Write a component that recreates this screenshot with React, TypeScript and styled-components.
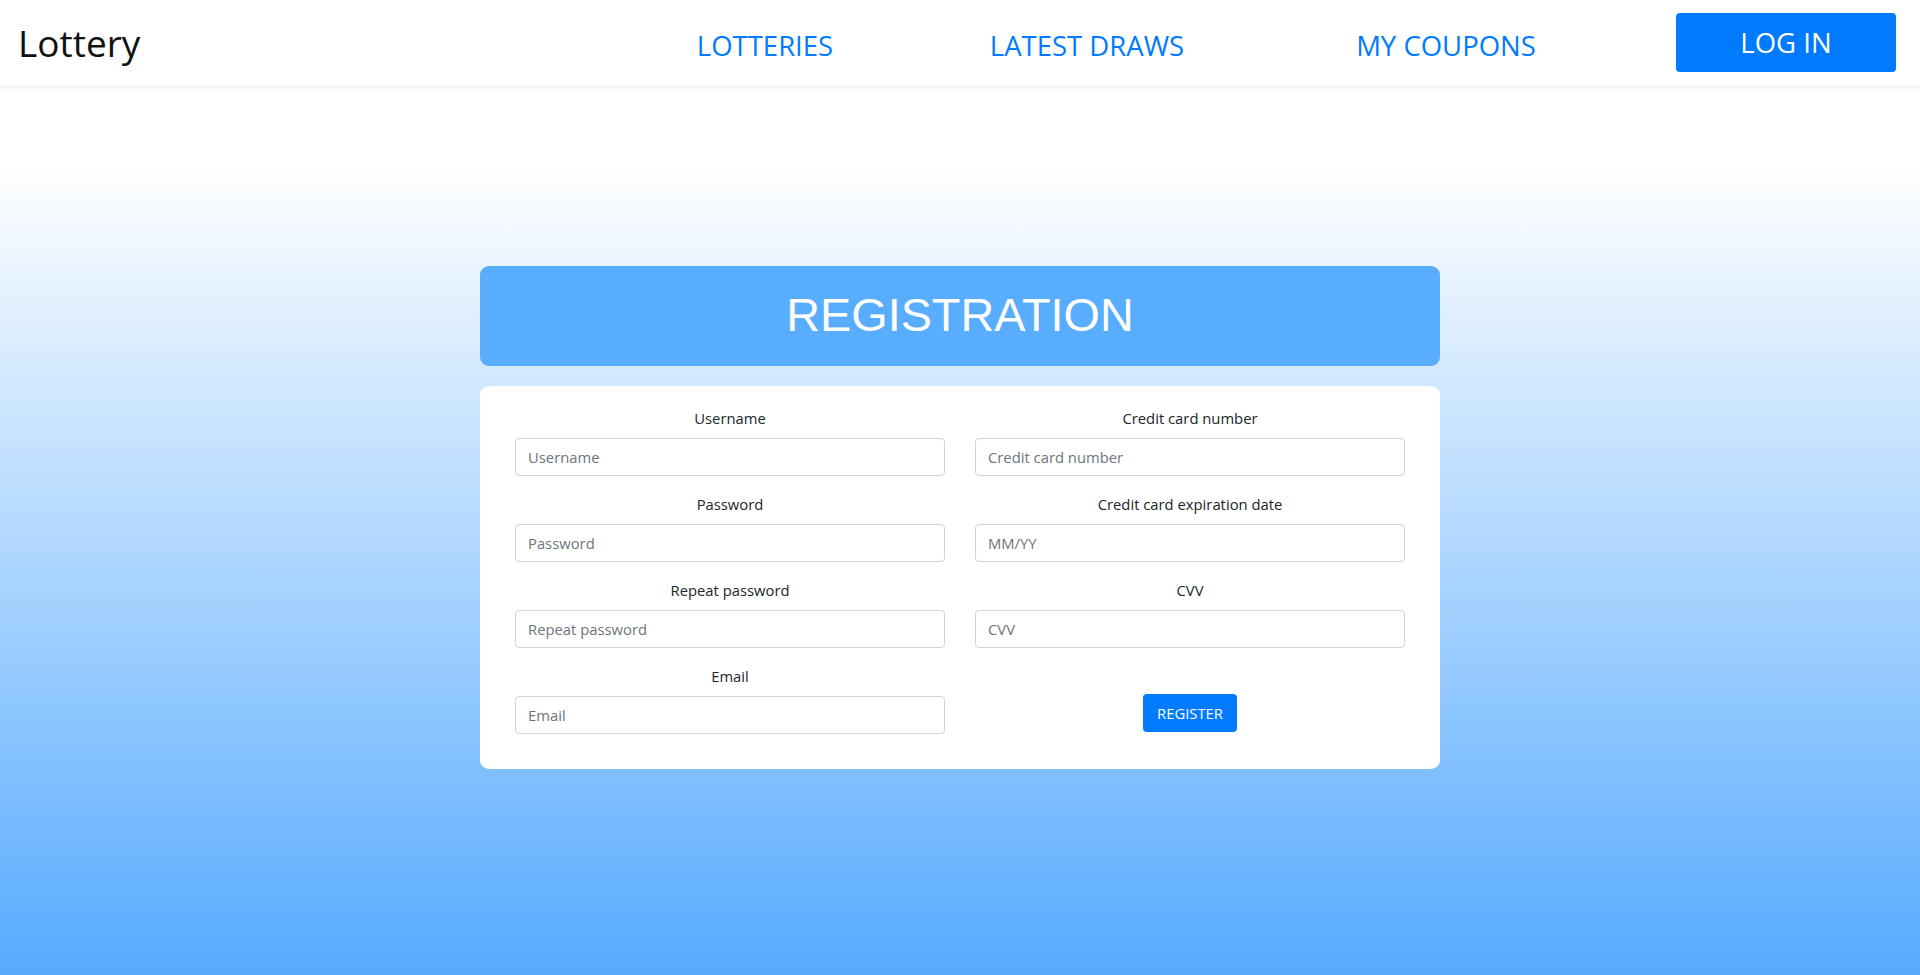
import React from "react";
import styled, { createGlobalStyle } from "styled-components";

const GlobalStyle = createGlobalStyle`
  html, body {
    margin: 0;
    padding: 0;
  }
  body {
    min-height: 975px;
    font-family: "Open Sans", "Noto Sans", Arial, sans-serif;
    color: #212529;
    background: linear-gradient(to bottom, #ffffff 0%, #ffffff 17%, #56aaff 100%);
    background-attachment: fixed;
  }
  * { box-sizing: border-box; }
`;

const Page = styled.div`
  min-height: 975px;
  display: flex;
  flex-direction: column;
`;

const Header = styled.header`
  height: 86px;
  background: #ffffff;
  box-shadow: 0 2px 4px rgba(0, 0, 0, 0.07);
  display: flex;
  align-items: center;
  padding: 0 24px 0 18px;
`;

const Brand = styled.a`
  flex: 1;
  font-family: "Open Sans", "Noto Sans", sans-serif;
  font-size: 37px;
  color: #111;
  text-decoration: none;
  padding-bottom: 2px;
`;

const NavLink = styled.a<{ $w: number }>`
  width: ${(p) => p.$w}px;
  text-align: center;
  font-size: 27.5px;
  color: #007bff;
  text-decoration: none;
  padding-top: 4px;
`;

const LoginButton = styled.button`
  width: 220px;
  height: 59px;
  margin-left: 32px;
  margin-top: -2px;
  background: #007bff;
  border: none;
  border-radius: 4px;
  color: #fff;
  font-family: "Open Sans", "Noto Sans", sans-serif;
  font-size: 27.5px;
  padding-top: 2px;
  cursor: pointer;
`;

const Main = styled.main`
  display: flex;
  justify-content: center;
  padding-top: 180px;
`;

const Wrapper = styled.div`
  width: 960px;
  display: flex;
  flex-direction: column;
  gap: 20px;
`;

const TitleBox = styled.div`
  height: 100px;
  background: #58adff;
  border-radius: 9px;
  display: flex;
  align-items: center;
  justify-content: center;
`;

const Title = styled.h1`
  margin: 0;
  font-family: "Liberation Sans", Arial, sans-serif;
  font-weight: 400;
  font-size: 46.8px;
  color: #ffffff;
  line-height: 1;
  padding-bottom: 2px;
`;

const FormCard = styled.form`
  background: #ffffff;
  border-radius: 9px;
  padding: 20px 35px 35px;
  display: grid;
  grid-template-columns: 1fr 1fr;
  column-gap: 30px;
`;

const Column = styled.div`
  display: flex;
  flex-direction: column;
  gap: 16px;
`;

const Group = styled.div`
  display: flex;
  flex-direction: column;
  align-items: stretch;
`;

const Label = styled.label`
  display: block;
  text-align: center;
  font-size: 14.8px;
  line-height: 24px;
  margin-bottom: 8px;
  color: #212529;
`;

const Input = styled.input`
  height: 38px;
  width: 100%;
  border: 1px solid #ced4da;
  border-radius: 4px;
  padding: 0 12px;
  font-family: "Open Sans", "Noto Sans", sans-serif;
  font-size: 14.8px;
  color: #495057;
  background: #fff;
  &::placeholder {
    color: #6c757d;
  }
`;

const ButtonSlot = styled.div`
  display: flex;
  justify-content: center;
  padding-top: 30px;
`;

const SubmitButton = styled.button`
  width: 94px;
  height: 38px;
  background: #007bff;
  color: #fff;
  border: none;
  border-radius: 4px;
  font-family: "Open Sans", "Noto Sans", sans-serif;
  font-size: 14.8px;
  padding: 0;
  cursor: pointer;
`;

type Field = { label: string; placeholder: string; type?: string };

const left: Field[] = [
  { label: "Username", placeholder: "Username" },
  { label: "Password", placeholder: "Password", type: "password" },
  { label: "Repeat password", placeholder: "Repeat password", type: "password" },
  { label: "Email", placeholder: "Email", type: "email" },
];

const right: Field[] = [
  { label: "Credit card number", placeholder: "Credit card number" },
  { label: "Credit card expiration date", placeholder: "MM/YY" },
  { label: "CVV", placeholder: "CVV" },
];

const FieldGroup = ({ f }: { f: Field }) => (
  <Group>
    <Label>{f.label}</Label>
    <Input type={f.type ?? "text"} placeholder={f.placeholder} />
  </Group>
);

export default function App() {
  return (
    <Page>
      <GlobalStyle />
      <Header>
        <Brand href="#">Lottery</Brand>
        <NavLink $w={322} href="#">LOTTERIES</NavLink>
        <NavLink $w={322} href="#">LATEST DRAWS</NavLink>
        <NavLink $w={396} href="#">MY COUPONS</NavLink>
        <LoginButton>LOG IN</LoginButton>
      </Header>
      <Main>
        <Wrapper>
          <TitleBox>
            <Title>REGISTRATION</Title>
          </TitleBox>
          <FormCard onSubmit={(e) => e.preventDefault()}>
            <Column>
              {left.map((f) => (
                <FieldGroup key={f.label} f={f} />
              ))}
            </Column>
            <Column>
              {right.map((f) => (
                <FieldGroup key={f.label} f={f} />
              ))}
              <ButtonSlot>
                <SubmitButton type="submit">REGISTER</SubmitButton>
              </ButtonSlot>
            </Column>
          </FormCard>
        </Wrapper>
      </Main>
    </Page>
  );
}
